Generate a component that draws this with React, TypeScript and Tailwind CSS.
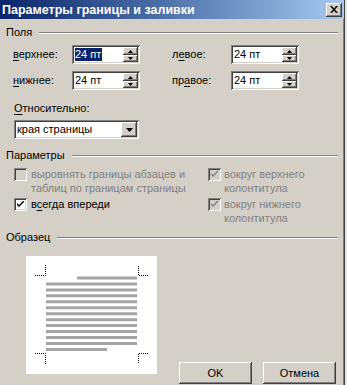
import React from 'react'

const raised =
  'bg-[#d4d0c8] shadow-[inset_-1px_-1px_#404040,inset_1px_1px_#ffffff,inset_-2px_-2px_#808080,inset_2px_2px_#d4d0c8]'
const sunken =
  'shadow-[inset_1px_1px_#808080,inset_-1px_-1px_#ffffff,inset_2px_2px_#404040,inset_-2px_-2px_#d4d0c8]'

const GroupHeader: React.FC<{ title: string; className?: string }> = ({ title, className }) => (
  <div className={`flex items-center h-[13px] ${className ?? ''}`}>
    <span className="leading-[13px]">{title}</span>
    <div className="flex-1 ml-[7px] mr-[6px] h-[2px] border-t border-t-[#808080] border-b border-b-white" />
  </div>
)

const SpinField: React.FC<{ value: string; selected?: boolean }> = ({ value, selected }) => (
  <div className={`w-[68px] h-[19px] bg-white flex p-[2px] ${sunken}`}>
    <div className="flex-1 flex items-center pl-[1px]">
      <span className={selected ? 'bg-[#0a246a] text-white leading-[13px] pr-[1px]' : 'leading-[13px]'}>
        {value}
      </span>
    </div>
    <div className="w-[15px] flex flex-col">
      <div className={`h-[8px] flex items-center justify-center ${raised}`}>
        <svg width="5" height="3" viewBox="0 0 5 3">
          <path d="M2.5 0 L5 3 L0 3 Z" fill="#000" />
        </svg>
      </div>
      <div className={`h-[7px] flex items-center justify-center ${raised}`}>
        <svg width="5" height="3" viewBox="0 0 5 3">
          <path d="M0 0 L5 0 L2.5 3 Z" fill="#000" />
        </svg>
      </div>
    </div>
  </div>
)

const CheckBox: React.FC<{ checked?: boolean; disabled?: boolean }> = ({ checked, disabled }) => (
  <div
    className={`w-[13px] h-[13px] shrink-0 flex items-center justify-center ${sunken} ${
      disabled ? 'bg-[#d4d0c8]' : 'bg-white'
    }`}
  >
    {checked && (
      <svg width="7" height="7" viewBox="0 0 7 7">
        <path d="M0 2 L2 4 L7 -1 L7 1 L2 6 L0 4 Z" fill={disabled ? '#808080' : '#000'} />
      </svg>
    )}
  </div>
)

const U: React.FC<{ children: React.ReactNode }> = ({ children }) => (
  <span className="underline underline-offset-2">{children}</span>
)

const Preview: React.FC = () => {
  const lines = Array.from({ length: 13 }, (_, i) => i)
  return (
    <div className="w-[131px] h-[118px] bg-white">
      <svg width="131" height="118" viewBox="0 0 131 118">
        <g stroke="#000" strokeWidth="1" strokeDasharray="1 1" fill="none">
          <path d="M9 19.5 H19.5 V9" />
          <path d="M122 19.5 H112.5 V9" />
          <path d="M9 97.5 H19.5 V108" />
          <path d="M122 97.5 H112.5 V108" />
        </g>
        {lines.map((i) => {
          const y = 22 + i * 5.95
          const x1 = i === 0 ? 51 : 20
          const x2 = i === 12 ? 81 : 111
          return <line key={i} x1={x1} x2={x2} y1={y} y2={y} stroke="#a4a4a4" strokeWidth="3" />
        })}
      </svg>
    </div>
  )
}

const DialogButton: React.FC<{ label: string }> = ({ label }) => (
  <div className={`w-[73px] h-[22px] flex items-center justify-center ${raised}`}>
    <span className="leading-[13px]">{label}</span>
  </div>
)

export default function App() {
  return (
    <div
      className="w-[347px] h-[385px] bg-[#e6e4df] overflow-hidden text-[11px] text-black"
      style={{ fontFamily: '"Liberation Sans", Arial, sans-serif' }}
    >
      <div className="w-[345px] h-[385px] bg-[#d4d0c8] border-r border-r-[#404040] shadow-[inset_-1px_0_#808080]">
        {/* title bar */}
        <div className="h-[19px] flex items-center justify-between bg-gradient-to-r from-[#0a246a] to-[#a6caf0]">
          <span className="pl-[2px] text-white font-bold text-[12.5px] leading-[14px]">
            Параметры границы и заливки
          </span>
          <div className={`w-[16px] h-[14px] mr-[2px] flex items-center justify-center ${raised}`}>
            <svg width="8" height="7" viewBox="0 0 8 7">
              <path d="M0 0 H2 L4 2.5 L6 0 H8 L5 3.5 L8 7 H6 L4 4.5 L2 7 H0 L3 3.5 Z" fill="#000" />
            </svg>
          </div>
        </div>

        <div className="pl-[6px]">
          <GroupHeader title="Поля" className="mt-[7px]" />

          <div className="flex items-center mt-[6px] pl-[7px]">
            <span className="w-[59px] leading-[13px]">
              <U>в</U>ерхнее:
            </span>
            <SpinField value="24 пт" selected />
            <span className="w-[59px] ml-[32px] leading-[13px]">
              л<U>е</U>вое:
            </span>
            <SpinField value="24 пт" />
          </div>

          <div className="flex items-center mt-[7px] pl-[7px]">
            <span className="w-[59px] leading-[13px]">
              <U>н</U>ижнее:
            </span>
            <SpinField value="24 пт" />
            <span className="w-[59px] ml-[32px] leading-[13px]">
              пр<U>а</U>вое:
            </span>
            <SpinField value="24 пт" />
          </div>

          <div className="mt-[12px] pl-[8px] leading-[13px]">
            <U>О</U>тносительно:
          </div>

          <div className={`mt-[5px] ml-[8px] w-[125px] h-[19px] bg-white flex p-[2px] ${sunken}`}>
            <div className="flex-1 flex items-center pl-[1px] leading-[13px]">края страницы</div>
            <div className={`w-[16px] flex items-center justify-center ${raised}`}>
              <svg width="7" height="4" viewBox="0 0 7 4">
                <path d="M0 0 H7 L3.5 4 Z" fill="#000" />
              </svg>
            </div>
          </div>

          <GroupHeader title="Параметры" className="mt-[10px]" />

          <div className="grid grid-cols-[194px_1fr] pl-[8px] mt-[5px] leading-[14px]">
            <div className="flex items-start gap-[4px]">
              <div className="mt-[1px]">
                <CheckBox disabled />
              </div>
              <div className="text-[#808080]">
                выровнять границы абзацев и
                <br />
                таблиц по границам страницы
              </div>
            </div>
            <div className="flex items-start gap-[3px]">
              <div className="mt-[1px]">
                <CheckBox checked disabled />
              </div>
              <div className="text-[#808080]">
                вокруг верхнего
                <br />
                колонтитула
              </div>
            </div>
            <div className="flex items-start gap-[4px] mt-[2px]">
              <div className="mt-[1px]">
                <CheckBox checked />
              </div>
              <div>
                в<U>с</U>егда впереди
              </div>
            </div>
            <div className="flex items-start gap-[3px] mt-[2px]">
              <div className="mt-[1px]">
                <CheckBox checked disabled />
              </div>
              <div className="text-[#808080]">
                вокруг нижнего
                <br />
                колонтитула
              </div>
            </div>
          </div>

          <GroupHeader title="Образец" className="mt-[6px]" />

          <div className="flex items-start mt-[12px] pl-[20px]">
            <Preview />
            <div className="flex gap-[11px] ml-[22px] mt-[106px]">
              <DialogButton label="OK" />
              <DialogButton label="Отмена" />
            </div>
          </div>
        </div>
      </div>
    </div>
  )
}
